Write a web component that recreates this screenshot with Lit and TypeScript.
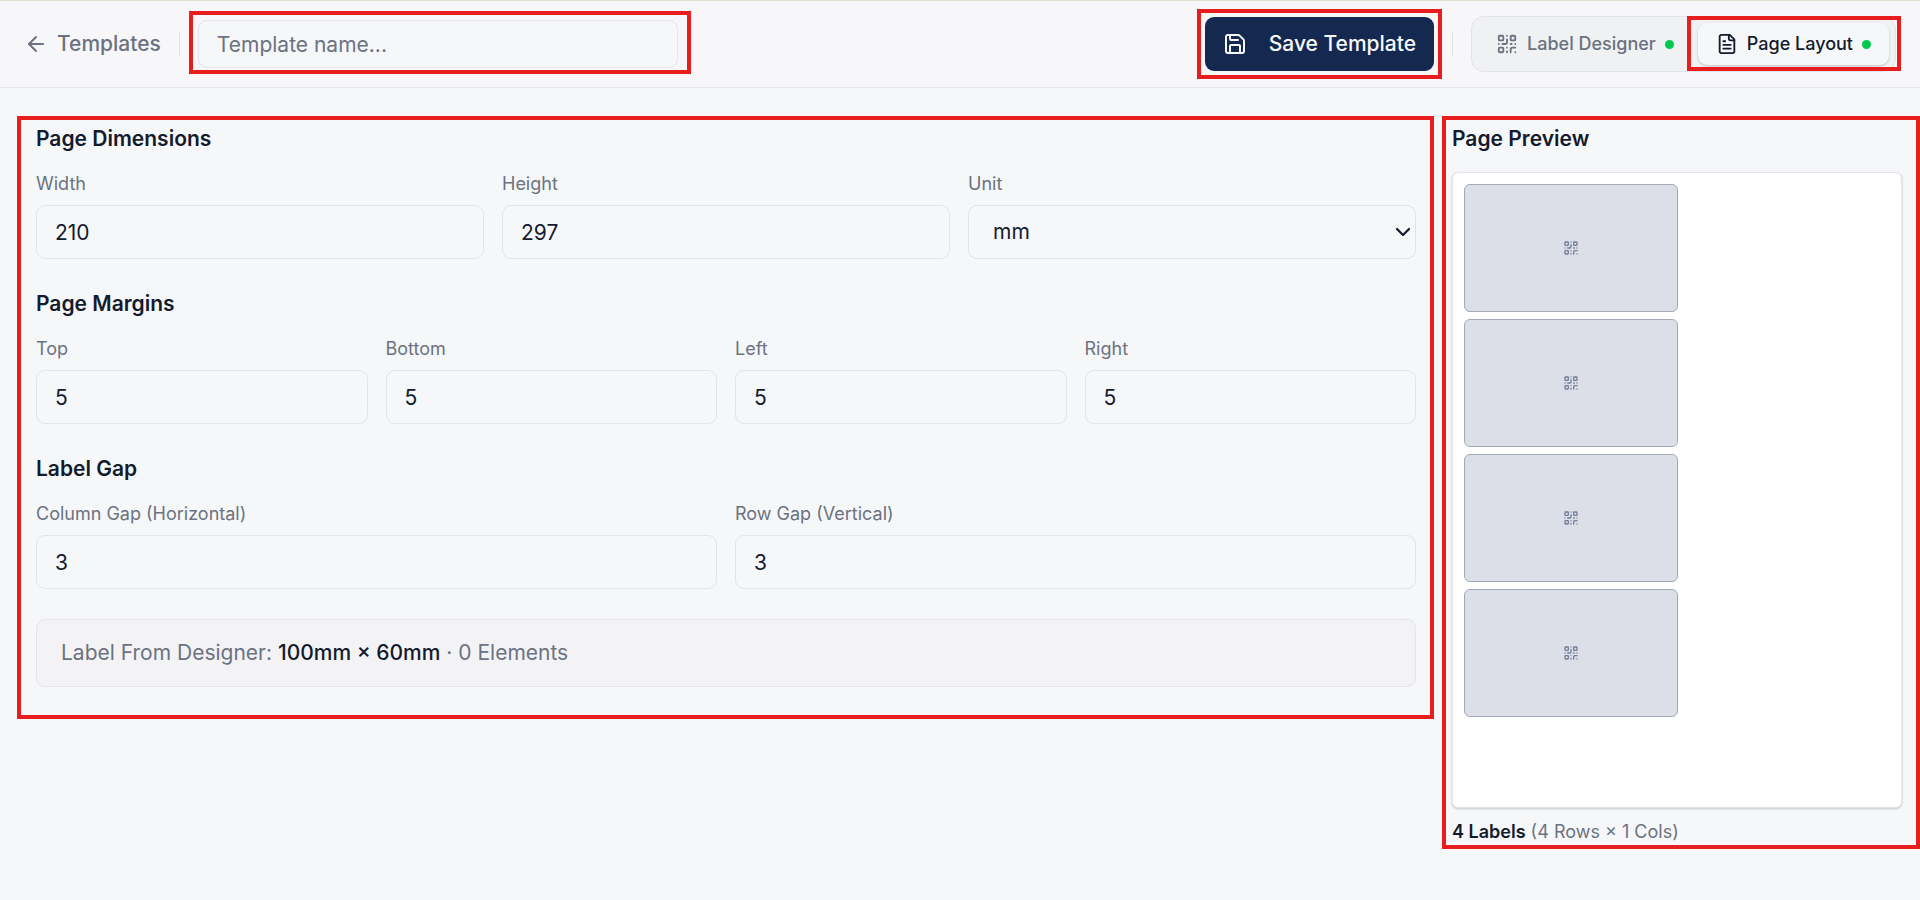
import { LitElement, html, css, svg } from "lit";
import { customElement, property, state } from "lit/decorators.js";

const ICONS: Record<string, unknown> = {
  back: svg`<path d="m12 19-7-7 7-7"/><path d="M19 12H5"/>`,
  save: svg`<path d="M15.2 3a2 2 0 0 1 1.4.6l3.8 3.8a2 2 0 0 1 .6 1.4V19a2 2 0 0 1-2 2H5a2 2 0 0 1-2-2V5a2 2 0 0 1 2-2z"/><path d="M17 21v-7a1 1 0 0 0-1-1H8a1 1 0 0 0-1 1v7"/><path d="M7 3v4a1 1 0 0 0 1 1h7"/>`,
  qr: svg`<rect width="5" height="5" x="3" y="3" rx="1"/><rect width="5" height="5" x="16" y="3" rx="1"/><rect width="5" height="5" x="3" y="16" rx="1"/><path d="M21 16h-3a2 2 0 0 0-2 2v3"/><path d="M21 21v.01"/><path d="M12 7v3a2 2 0 0 1-2 2H7"/><path d="M3 12h.01"/><path d="M12 3h.01"/><path d="M12 16v.01"/><path d="M16 12h1"/><path d="M21 12v.01"/><path d="M12 21v-1"/>`,
  file: svg`<path d="M15 2H6a2 2 0 0 0-2 2v16a2 2 0 0 0 2 2h12a2 2 0 0 0 2-2V7Z"/><path d="M14 2v4a2 2 0 0 0 2 2h4"/><path d="M10 9H8"/><path d="M16 13H8"/><path d="M16 17H8"/>`,
  chevron: svg`<path d="m4 8 8 8 8-8"/>`,
};

@customElement("line-icon")
class LineIcon extends LitElement {
  @property() name = "";
  @property({ type: Number }) weight = 2;

  static styles = css`
    :host { display: block; flex: none; width: 24px; height: 24px; }
    svg { display: block; width: 100%; height: 100%; }
  `;

  render() {
    return html`<svg viewBox="0 0 24 24" fill="none" stroke="currentColor" stroke-width=${this.weight}
      stroke-linecap="round" stroke-linejoin="round" aria-hidden="true">${ICONS[this.name]}</svg>`;
  }
}

type Field = { id: string; label: string; value: number };

const SIZE: Field[] = [
  { id: "width", label: "Width", value: 210 },
  { id: "height", label: "Height", value: 297 },
];
const MARGINS: Field[] = [
  { id: "top", label: "Top", value: 5 },
  { id: "bottom", label: "Bottom", value: 5 },
  { id: "left", label: "Left", value: 5 },
  { id: "right", label: "Right", value: 5 },
];
const GAPS: Field[] = [
  { id: "col-gap", label: "Column Gap (Horizontal)", value: 3 },
  { id: "row-gap", label: "Row Gap (Vertical)", value: 3 },
];

const PREVIEW_WIDTH = 450;

@customElement("app-root")
class AppRoot extends LitElement {
  @state() private label = { width: 100, height: 60, rows: 4, cols: 1 };

  static styles = css`
    :host {
      --ink: #141b2d;
      --muted: #6b7280;
      --line: #e2e4e9;
      --page: #f6f7f9;
      --mark: #e81e1e;
      display: block;
      min-height: 100vh;
      box-sizing: border-box;
      background: var(--page);
      color: var(--ink);
      font: 400 21px/30px Inter, "Liberation Sans", sans-serif;
    }
    *, *::before, *::after { box-sizing: border-box; }
    button, input, select { font: inherit; color: inherit; margin: 0; }

    .marked { position: relative; }
    .marked::after {
      content: "";
      position: absolute;
      border: 4px solid var(--mark);
      pointer-events: none;
    }
    .name::after { inset: -9px -13px -6px -9px; }
    .save-wrap::after { inset: -8px; }
    .current::after { inset: -7px -12px -6px -11px; }
    .settings::after { inset: -8px -18px -32px -19px; }
    .preview::after { inset: -8px -18px -4px -10px; }

    .bar {
      display: flex;
      align-items: center;
      gap: 18px;
      padding: 15px 24px;
      background: #f7f7fa;
      border-top: 1px solid #dde2d5;
      border-bottom: 1px solid var(--line);
    }
    .back {
      display: flex;
      align-items: center;
      gap: 9px;
      color: var(--muted);
      font-weight: 500;
      text-decoration: none;
    }
    .rule { width: 1px; height: 24px; background: var(--line); }
    .name { flex: 0 1 480px; min-width: 0; }
    .name input { height: 48px; display: block; }
    .spacer { flex: 1; margin-right: -18px; }

    .box {
      width: 100%;
      height: 54px;
      padding: 0 18px;
      border: 1px solid var(--line);
      border-radius: 9px;
      background: var(--page);
      outline: none;
      appearance: none;
    }
    .box[type="number"] { appearance: textfield; }
    .box::placeholder { color: var(--muted); opacity: 1; }

    .save {
      display: flex;
      align-items: center;
      gap: 22px;
      height: 54px;
      padding: 0 18px;
      border: 0;
      border-radius: 9px;
      background: #142850;
      color: #f7f8fa;
      font-weight: 500;
      white-space: nowrap;
    }
    .tabs {
      display: flex;
      gap: 6px;
      padding: 6px;
      border: 1px solid var(--line);
      border-radius: 13px;
      background: #f0f1f3;
    }
    .tab {
      display: flex;
      align-items: center;
      gap: 9px;
      height: 42px;
      padding: 0 18px;
      border: 0;
      border-radius: 9px;
      background: none;
      color: var(--muted);
      font-size: 18px;
      font-weight: 500;
      white-space: nowrap;
    }
    .tab line-icon { width: 22px; height: 22px; }
    .tab.current {
      background: var(--page);
      color: var(--ink);
      box-shadow: 0 1px 3px #0000001a, 0 1px 2px #0000001a;
    }
    .dot { width: 9px; height: 9px; border-radius: 50%; background: #00c950; }

    .main {
      display: grid;
      grid-template-columns: minmax(0, 1fr) auto;
      align-items: start;
      gap: 36px;
      padding: 36px 18px 36px 36px;
    }
    .settings { display: grid; gap: 30px; }
    .group { display: grid; gap: 16px; }
    h2 { margin: 0; font: inherit; font-weight: 600; }
    .fields {
      display: grid;
      grid-auto-flow: column;
      grid-auto-columns: minmax(0, 1fr);
      gap: 18px;
    }
    .field { display: grid; gap: 8px; }
    .field label { color: var(--muted); font-size: 18px; line-height: 27px; }
    .pick { display: grid; align-items: center; }
    .pick > * { grid-area: 1 / 1; }
    .pick select { padding: 0 24px; }
    .pick line-icon {
      justify-self: end;
      width: 18px;
      height: 18px;
      margin-right: 4px;
      pointer-events: none;
    }
    .info {
      padding: 18px 24px;
      border: 1px solid var(--line);
      border-radius: 9px;
      background: #f3f3f6;
      color: var(--muted);
    }
    b { color: var(--ink); font-weight: 500; }

    .preview { display: grid; }
    .sheet {
      display: grid;
      align-content: start;
      margin: 18px 0 10px;
      padding: 11px;
      gap: 7px;
      border: 1px solid var(--line);
      border-radius: 6px;
      background: #fff;
      box-shadow: 0 1px 3px #0000001a, 0 1px 2px #0000001a;
    }
    .cell {
      display: grid;
      place-items: center;
      border: 1px solid #a1a9b9;
      border-radius: 6px;
      background: #dcdfe7;
      color: #727c98;
    }
    .cell line-icon { width: 16px; height: 16px; }
    .count { margin: 0; color: var(--muted); font-size: 18px; line-height: 27px; }
    .count b { font-weight: 600; }
  `;

  private field(f: Field) {
    return html`<div class="field">
      <label for=${f.id}>${f.label}</label>
      <input class="box" id=${f.id} type="number" .value=${String(f.value)} />
    </div>`;
  }

  private group(title: string, fields: Field[], extra: unknown = null) {
    return html`<section class="group">
      <h2>${title}</h2>
      <div class="fields">${fields.map((f) => this.field(f))}${extra}</div>
    </section>`;
  }

  render() {
    const { width, height, rows, cols } = this.label;
    const [pageW, pageH] = SIZE.map((f) => f.value);
    const px = (mm: number) => Math.floor((mm * PREVIEW_WIDTH) / pageW);
    return html`
      <header class="bar">
        <a class="back" href="#templates"><line-icon name="back"></line-icon>Templates</a>
        <span class="rule"></span>
        <div class="name marked">
          <input class="box" type="text" placeholder="Template name..." aria-label="Template name" />
        </div>
        <span class="spacer"></span>
        <div class="save-wrap marked">
          <button class="save" type="button"><line-icon name="save"></line-icon>Save Template</button>
        </div>
        <span class="rule"></span>
        <nav class="tabs">
          <button class="tab" type="button"><line-icon name="qr"></line-icon>Label Designer<span class="dot"></span></button>
          <button class="tab current marked" type="button"><line-icon name="file"></line-icon>Page Layout<span class="dot"></span></button>
        </nav>
      </header>
      <main class="main">
        <div class="settings marked">
          ${this.group("Page Dimensions", SIZE, html`<div class="field">
            <label for="unit">Unit</label>
            <div class="pick">
              <select class="box" id="unit"><option>mm</option><option>cm</option><option>in</option></select>
              <line-icon name="chevron" weight="3"></line-icon>
            </div>
          </div>`)}
          ${this.group("Page Margins", MARGINS)}
          ${this.group("Label Gap", GAPS)}
          <div class="info">Label From Designer: <b>${width}mm × ${height}mm</b> · 0 Elements</div>
        </div>
        <aside class="preview marked">
          <h2>Page Preview</h2>
          <div class="sheet" style="width:${PREVIEW_WIDTH}px;aspect-ratio:${pageW}/${pageH};grid-template-columns:repeat(${cols},${px(width)}px);grid-auto-rows:${px(height)}px">
            ${Array.from({ length: rows * cols }, () => html`<div class="cell"><line-icon name="qr"></line-icon></div>`)}
          </div>
          <p class="count"><b>${rows * cols} Labels</b> (${rows} Rows × ${cols} Cols)</p>
        </aside>
      </main>
    `;
  }
}
